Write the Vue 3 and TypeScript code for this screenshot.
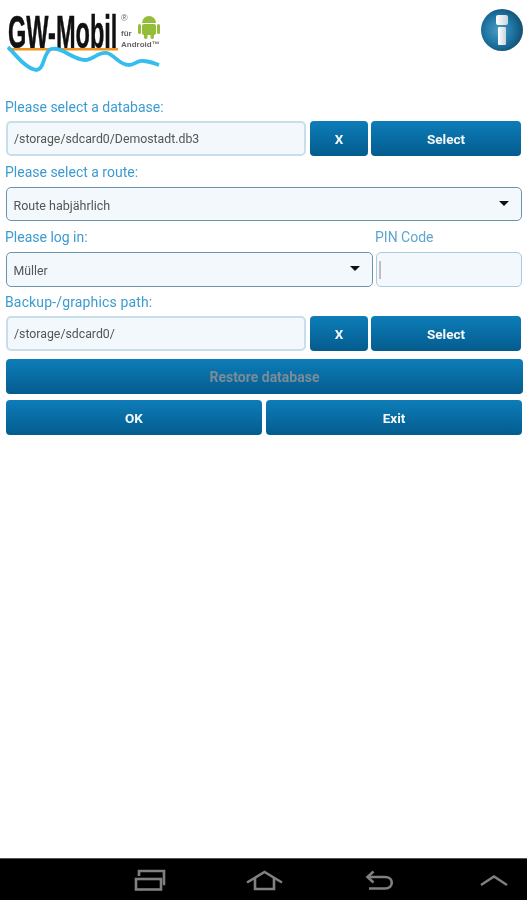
<script setup lang="ts">
const databasePath = "/storage/sdcard0/Demostadt.db3";
const backupPath = "/storage/sdcard0/";
const route = "Route habjährlich";
const user = "Müller";
</script>

<template>
  <div class="screen">
    <main class="content">
      <header class="header">
        <svg class="logo" width="156" height="70" viewBox="0 -10 156 70">
          <text class="logo__name" transform="translate(1 34) scale(0.512 1)">GW-Mobil</text>
          <rect x="1" y="34" width="110" height="2.5" fill="#f0921e" />
          <path
            d="M1 33 C8 40 18 54 29 56 C38 56 36 38 44 35 C54 32 66 46 78 46 C86 46 92 37 100 39 C108 41 112 51 122 51 C128 51 130 46 136 47 C142 47 146 49 152 51"
            fill="none"
            stroke="#35bdf0"
            stroke-width="3.8"
          />
          <text x="114" y="7" class="logo__mark">®</text>
          <text x="114" y="22" class="logo__small">für</text>
          <text x="114" y="33" class="logo__small">Android™</text>
          <g fill="#95bd3a">
            <path d="M135 9 a7 7 0 0 1 14 0 z" />
            <rect x="135" y="10" width="14" height="11" rx="2" />
            <rect x="131" y="10" width="3" height="10" rx="1.500" />
            <rect x="150" y="10" width="3" height="10" rx="1.500" />
            <rect x="137" y="19" width="3.500" height="6" rx="1.700" />
            <rect x="143.500" y="19" width="3.500" height="6" rx="1.700" />
          </g>
        </svg>
        <svg class="info" width="42" height="42" viewBox="0 0 42 42">
          <defs>
            <radialGradient id="infoBall" cx="42%" cy="50%" r="58%">
              <stop offset="0" stop-color="#4d9cc5" />
              <stop offset="0.6" stop-color="#1d74a3" />
              <stop offset="1" stop-color="#134f72" />
            </radialGradient>
            <linearGradient id="infoMark" x1="0" y1="0" x2="1" y2="0">
              <stop offset="0" stop-color="#ffffff" />
              <stop offset="1" stop-color="#c9d6dd" />
            </linearGradient>
          </defs>
          <circle cx="21" cy="21" r="21" fill="url(#infoBall)" />
          <rect x="15" y="6" width="12" height="10" rx="2" fill="url(#infoMark)" />
          <rect x="17" y="18" width="8" height="18" rx="1" fill="url(#infoMark)" />
        </svg>
      </header>

      <label class="label label--first">Please select a database:</label>
      <div class="row">
        <div class="field field--path">{{ databasePath }}</div>
        <button class="btn btn--x">X</button>
        <button class="btn btn--select">Select</button>
      </div>

      <label class="label">Please select a route:</label>
      <div class="row row--route">
        <div class="field field--dropdown field--full">
          <span class="field__value">{{ route }}</span>
          <i class="caret"></i>
        </div>
      </div>

      <div class="login-labels">
        <label class="label label--flush label--login">Please log in:</label>
        <label class="label label--flush label--pin">PIN Code</label>
      </div>
      <div class="row">
        <div class="field field--dropdown field--user">
          <span class="field__value">{{ user }}</span>
          <i class="caret"></i>
        </div>
        <div class="field field--pin"><i class="cursor"></i></div>
      </div>

      <label class="label label--backup">Backup-/graphics path:</label>
      <div class="row">
        <div class="field field--path">{{ backupPath }}</div>
        <button class="btn btn--x">X</button>
        <button class="btn btn--select">Select</button>
      </div>

      <button class="btn btn--restore" disabled>Restore database</button>

      <div class="actions">
        <button class="btn btn--action">OK</button>
        <button class="btn btn--action">Exit</button>
      </div>
    </main>

    <nav class="nav">
      <svg width="32" height="26" viewBox="0 0 32 26" fill="none" stroke="#808080" stroke-width="2.600">
        <rect x="2" y="12" width="25" height="10.500" />
        <path d="M5 9 V4 H30 V17 H29" />
      </svg>
      <svg width="38" height="26" viewBox="0 0 38 26" fill="none" stroke="#808080" stroke-width="2.600">
        <path d="M1 15.500 L18.500 5 L36 15.500" />
        <path d="M9 11 V22 H28 V11" />
      </svg>
      <svg width="30" height="26" viewBox="0 0 30 26" fill="none" stroke="#808080" stroke-width="2.600">
        <path d="M4 10 H21 C30 10 30 21.500 21 21.500 H5" />
        <path d="M9.500 4.500 L3.500 10 L9.500 15.500" />
      </svg>
      <svg class="nav__up" width="28" height="26" viewBox="0 0 28 26" fill="none" stroke="#808080" stroke-width="2.400">
        <path d="M1 18 L14 9.500 L27 18" />
      </svg>
    </nav>
  </div>
</template>

<style scoped>
.screen {
  width: 527px;
  height: 900px;
  display: flex;
  flex-direction: column;
  background-color: #ffffff;
  font-family: Roboto, "Liberation Sans", sans-serif;
  overflow: hidden;
  filter: blur(0.4px);
}

.content {
  flex: 1;
  padding: 0 5px 0 6px;
}

.header {
  height: 100px;
  display: flex;
  justify-content: space-between;
  align-items: flex-start;
}

.logo {
  margin-top: 4px;
  margin-left: 1px;
}

.logo__name {
  font-family: "Liberation Sans", sans-serif;
  font-size: 46px;
  font-weight: 700;
  fill: #111111;
  stroke: #111111;
  stroke-width: 0.5px;
}

.logo__mark {
  font-family: "Liberation Sans", sans-serif;
  font-size: 9px;
  fill: #666666;
}

.logo__small {
  font-family: "Liberation Sans", sans-serif;
  font-size: 8px;
  font-weight: 700;
  fill: #666666;
}

.info {
  margin-top: 9px;
  margin-right: -1px;
}

.label {
  display: block;
  height: 22px;
  margin-top: 9px;
  margin-left: -1px;
  font-size: 14px;
  line-height: 14px;
  color: #3c9bd0;
}

.label--first {
  height: 21px;
  margin-top: 0;
}

.label--backup {
  height: 21px;
  margin-top: 8px;
  letter-spacing: 0.15px;
}

.row {
  display: flex;
  height: 35px;
}

.row--route {
  height: 34px;
}

.field {
  box-sizing: border-box;
  height: 35px;
  padding: 0 6px;
  display: flex;
  align-items: center;
  justify-content: space-between;
  font-size: 12.300px;
  color: #555555;
  background-color: #f2f8fb;
  border-radius: 5px;
}

.field__value {
  padding-top: 2px;
}

.field--path {
  width: 300px;
  margin-right: 4px;
  border: 2px solid #c8deea;
}

.field--dropdown {
  border: 1.500px solid #6d94ad;
  padding-left: 6.500px;
  padding-right: 12px;
}

.field--full {
  width: 516px;
  height: 34px;
  font-size: 12.500px;
}

.field--user {
  width: 367px;
}

.field--pin {
  width: 146px;
  margin-left: 3px;
  padding: 0 2px;
  justify-content: flex-start;
  border: 1.500px solid #a9cbdc;
}

.cursor {
  width: 2px;
  height: 18px;
  background-color: #c5bcbc;
}

.caret {
  width: 0;
  height: 0;
  margin-top: -2px;
  border-left: 5.500px solid transparent;
  border-right: 5.500px solid transparent;
  border-top: 5.500px solid #111111;
}

.login-labels {
  display: flex;
  margin-top: 9px;
}

.label--flush {
  margin-top: 0;
}

.label--login {
  width: 371px;
}

.label--pin {
  color: #5fa5cf;
}

.btn {
  border: 0;
  padding: 0;
  height: 35px;
  border-radius: 4px;
  background: linear-gradient(#0d7db8, #045c8e);
  color: #f4f8fa;
  font-family: Roboto, "Liberation Sans", sans-serif;
  font-size: 13.500px;
  font-weight: 700;
}

.btn--x {
  width: 58px;
  margin-right: 3px;
}

.btn--select {
  width: 150px;
}

.btn--restore {
  display: block;
  width: 517px;
  margin-top: 8px;
  font-size: 14px;
  color: #7b8c96;
}

.actions {
  display: flex;
  gap: 4px;
  margin-top: 6px;
}

.btn--action {
  width: 256px;
}

.nav {
  height: 42px;
  flex-shrink: 0;
  box-sizing: border-box;
  display: flex;
  align-items: center;
  gap: 80px;
  padding-left: 134px;
  background-color: #000000;
  border-top: 1px solid #555555;
}

.nav__up {
  margin-left: 6px;
}
</style>
